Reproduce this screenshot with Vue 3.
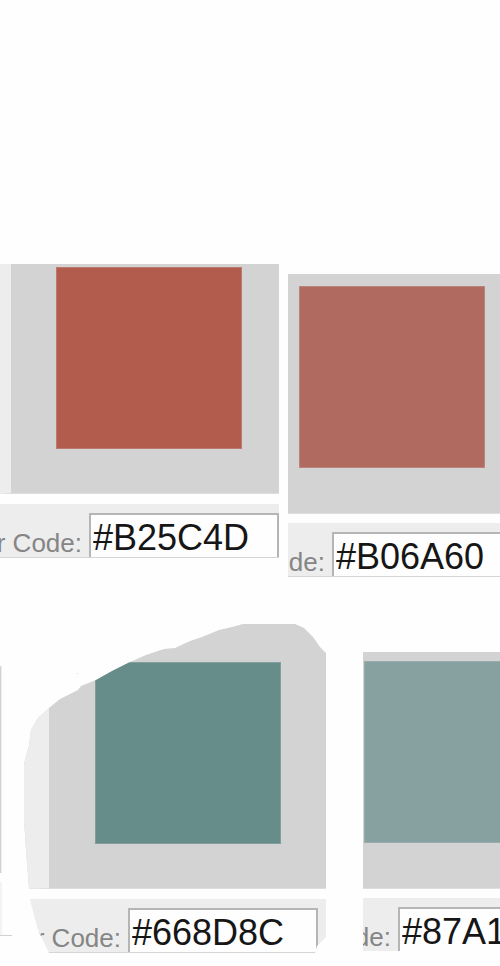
<script setup>
import { reactive } from 'vue'

const cards = reactive([
  { id: 'brick', label: 'r Code:', code: '#B25C4D', fill: '#b25c4d' },
  { id: 'rose', label: 'de:', code: '#B06A60', fill: '#b06a60' },
  { id: 'teal', label: 'r Code:', code: '#668D8C', fill: '#668d8a' },
  { id: 'mist', label: 'de:', code: '#87A1', fill: '#87a1a1' }
])
</script>

<template>
  <main class="board">
    <div class="scrap" aria-hidden="true">
      <div class="scrap-edge"></div>
      <div class="scrap-foot"></div>
    </div>
    <div v-for="card in cards" :key="card.id" class="slot" :class="card.id">
      <section class="card">
        <div class="stage">
          <div class="swatch" :style="{ backgroundColor: card.fill }"></div>
        </div>
        <div class="field">
          <label :for="card.id">{{ card.label }}</label>
          <input :id="card.id" v-model="card.code" type="text" spellcheck="false" />
        </div>
      </section>
    </div>
  </main>
</template>

<style>
body {
  margin: 0;
  background: #fefefe;
}
</style>

<style scoped>
.board {
  display: grid;
  grid-template-columns: 24px minmax(0, 255fr) 9px minmax(0, 38fr) 37px minmax(0, 137fr);
  row-gap: 47px;
  padding: 264px 0 13px;
  overflow: hidden;
  font-family: "Liberation Sans", Arial, sans-serif;
}

.slot {
  min-width: 0;
}

.brick {
  grid-column: 1 / 3;
  grid-row: 1;
}

.rose {
  grid-column: 4 / 7;
  grid-row: 1;
  padding-top: 10px;
}

.teal {
  position: relative;
  grid-column: 2 / 5;
  grid-row: 2;
}

.mist {
  grid-column: 6;
  grid-row: 2;
  padding-top: 28px;
}

.card {
  display: flex;
  flex-direction: column;
  gap: 10px;
  overflow: hidden;
}

.rose .card,
.mist .card {
  gap: 9px;
}

.stage {
  box-sizing: border-box;
  background: #d3d3d3;
  border-bottom: 1px solid #dedede;
}

.swatch {
  width: 186px;
  height: 182px;
  box-sizing: border-box;
  border: 1px solid rgba(211, 211, 211, 0.25);
}

.brick .stage {
  padding: 3px 0 44px 45px;
  border-left: 11px solid #ededed;
}

.rose .stage {
  padding: 12px 0 45px 11px;
}

.teal .stage {
  padding: 38px 0 44px 46px;
  border-left: 25px solid #ededed;
}

.mist .stage {
  padding: 9px 0 45px 1px;
}

.field {
  display: flex;
  align-items: flex-start;
  padding-top: 9px;
  background: #ededed;
  border-bottom: 1px solid #d5d5d5;
}

.mist .field {
  border-bottom: 0;
}

label {
  display: flex;
  flex: none;
  justify-content: flex-end;
  box-sizing: border-box;
  width: 89px;
  height: 44px;
  padding: 16px 7px 0 0;
  overflow: hidden;
  color: #858585;
  font-size: 26px;
  line-height: 28px;
  white-space: nowrap;
}

.rose label {
  width: 44px;
}

.teal label {
  width: 104px;
}

.mist label {
  width: 35px;
}

input {
  flex: none;
  box-sizing: border-box;
  width: 190px;
  height: 44px;
  margin: 0;
  padding: 4px 0 0 2px;
  border: solid #b5b5b5;
  border-width: 2px 2px 0;
  border-radius: 0;
  outline: 0;
  background: #fefefe;
  color: #161616;
  font-family: inherit;
  font-size: 36px;
  line-height: 38px;
}

.teal .card {
  clip-path: polygon(
    219px 0, 271px 0, 280px 4px, 289px 13px, 296px 23px, 302px 29px,
    302px 313px, 293px 322px, 291px 100%, 25px 100%, 14px 306px, 6px 276px,
    5px 264px, 2px 226px, 0 196px, 0 140px, 5px 121px, 7px 106px,
    14px 94px, 25px 84px, 36px 75px, 54px 66px, 57px 62px, 72px 56px,
    88px 47px, 106px 38px, 122px 31px, 140px 25px, 151px 24px, 166px 17px,
    178px 13px, 195px 6px, 208px 3px
  );
}

.teal::before {
  content: "";
  position: absolute;
  top: 49px;
  left: 53px;
  width: 1px;
  height: 1px;
  background: #dcdcdc;
}

.scrap {
  display: flex;
  flex-direction: column;
  grid-column: 1;
  grid-row: 2;
  gap: 9px;
  width: 12px;
  padding-top: 42px;
}

.scrap-edge {
  width: 1px;
  height: 207px;
  background: #d3d3d3;
  border-right: 1px solid #ededed;
}

.scrap-foot {
  height: 53px;
  background: linear-gradient(90deg, #f3f3f3 2px, transparent 2px);
  border-bottom: 1px solid #d0d0d0;
}
</style>
